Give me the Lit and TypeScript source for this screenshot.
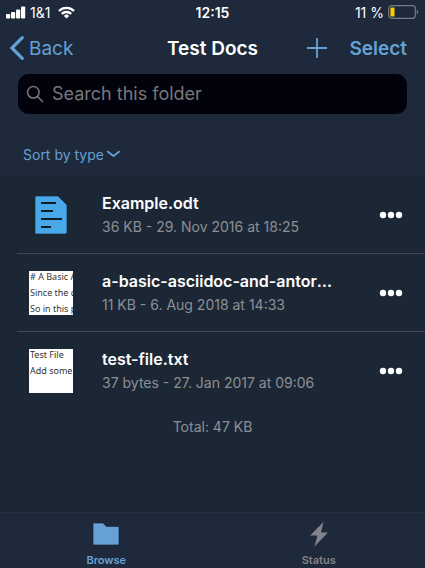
import { LitElement, html, css } from "lit";
import { customElement, property } from "lit/decorators.js";

interface FileEntry {
  name: string;
  info: string;
  preview?: string[];
}

const files: FileEntry[] = [
  { name: "Example.odt", info: "36 KB - 29. Nov 2016 at 18:25" },
  {
    name: "a-basic-asciidoc-and-antora-demo.adoc",
    info: "11 KB - 6. Aug 2018 at 14:33",
    preview: ["# A Basic A", "Since the d", "So in this p"],
  },
  {
    name: "test-file.txt",
    info: "37 bytes - 27. Jan 2017 at 09:06",
    preview: ["Test File", "Add some"],
  },
];

@customElement("file-row")
export class FileRow extends LitElement {
  @property({ attribute: false }) file!: FileEntry;

  static styles = css`
    :host {
      display: flex;
      align-items: center;
      height: 77px;
      padding-right: 18px;
    }
    .thumb {
      flex: none;
      display: flex;
      justify-content: center;
      width: 44px;
      margin: 0 29px 0 12px;
    }
    .paper {
      width: 44px;
      height: 44px;
      overflow: hidden;
      background: #fff;
      color: #333;
      font: 9px/16px "Noto Sans", sans-serif;
      white-space: nowrap;
    }
    .lines {
      margin: -2px 0 0 1px;
    }
    .text {
      flex: 1;
      min-width: 0;
    }
    .name,
    .info {
      margin: 0;
      max-width: 232px;
      overflow: hidden;
      text-overflow: ellipsis;
      white-space: nowrap;
    }
    .name {
      font-size: 16px;
      font-weight: 600;
      line-height: 24px;
      color: #fff;
    }
    .info {
      font-size: 14px;
      line-height: 24px;
      color: #8c8f93;
    }
    button {
      flex: none;
      display: flex;
      padding: 10px 4px;
      border: 0;
      background: none;
      color: #fff;
    }
  `;

  render() {
    const { name, info, preview } = this.file;
    return html`
      <div class="thumb">
        ${preview
          ? html`<div class="paper">
              <div class="lines">${preview.map((line) => html`<div>${line}</div>`)}</div>
            </div>`
          : html`<svg width="34" height="40" viewBox="0 0 34 40" aria-hidden="true">
              <path d="M2 1h22l9 9v27a2 2 0 0 1-2 2H2a1 1 0 0 1-1-1V2a1 1 0 0 1 1-1z" fill="#48a8e8" stroke="#142030" stroke-width=".6" />
              <path d="M7 8h15M7 16h12M7 24h21M7 32h10" stroke="#121d2c" stroke-width="2.2" />
            </svg>`}
      </div>
      <div class="text">
        <p class="name">${name}</p>
        <p class="info">${info}</p>
      </div>
      <button aria-label="Actions for ${name}">
        <svg width="24" height="8" viewBox="0 0 24 8" fill="currentColor">
          <circle cx="4" cy="4" r="3.2" />
          <circle cx="12" cy="4" r="3.2" />
          <circle cx="20" cy="4" r="3.2" />
        </svg>
      </button>
    `;
  }
}

@customElement("app-root")
export class AppRoot extends LitElement {
  static styles = css`
    :host {
      display: flex;
      flex-direction: column;
      min-height: 100vh;
      background: #1c2736;
      color: #fff;
      font-family: Inter, "Liberation Sans", sans-serif;
    }
    svg {
      flex: none;
      display: block;
    }
    button {
      padding: 0;
      border: 0;
      background: none;
      color: #65a1d5;
      font: inherit;
    }
    a {
      color: #65a1d5;
      text-decoration: none;
    }
    .top {
      background: #1e293b;
      border-bottom: 1px solid #1a2534;
    }
    .status,
    .nav {
      display: grid;
      grid-template-columns: 1fr auto 1fr;
      align-items: center;
    }
    .status {
      height: 24px;
      padding: 0 6px;
      font-size: 14px;
    }
    .carrier,
    .power {
      display: flex;
      align-items: center;
      gap: 4px;
    }
    .carrier svg:last-child {
      margin-left: 4px;
    }
    .power {
      justify-content: flex-end;
    }
    .clock {
      font-weight: 600;
    }
    .nav {
      height: 48px;
      padding: 0 18px;
      font-size: 19px;
    }
    .back {
      display: flex;
      align-items: center;
      gap: 4px;
      margin-left: -9px;
    }
    h1 {
      margin: 0;
      font-size: 19px;
      font-weight: 600;
    }
    .actions {
      display: flex;
      align-items: center;
      justify-content: flex-end;
      gap: 22px;
    }
    .select {
      font-weight: 600;
    }
    .search {
      display: flex;
      align-items: center;
      gap: 8px;
      height: 40px;
      margin: 2px 18px 17px;
      padding: 0 8px;
      border-radius: 11px;
      background: #01020c;
      color: #77777a;
    }
    input {
      flex: 1;
      min-width: 0;
      padding: 0;
      border: 0;
      outline: 0;
      background: none;
      color: #fff;
      font: 18px/24px Inter, "Liberation Sans", sans-serif;
      appearance: none;
    }
    input::placeholder {
      color: #77777a;
      opacity: 1;
    }
    .sort {
      display: flex;
      align-items: center;
      height: 44px;
      padding: 0 23px;
      background: #1e293b;
    }
    .sort button {
      display: flex;
      align-items: center;
      gap: 3px;
      font-size: 14px;
    }
    main {
      flex: 1;
    }
    ul {
      margin: 0 0 0 17px;
      padding: 0;
      list-style: none;
    }
    li + li {
      border-top: 1px solid #41474f;
    }
    .total {
      margin: 6px 0 0;
      font-size: 14px;
      line-height: 24px;
      text-align: center;
      color: #8c8f93;
    }
    .tabs {
      display: grid;
      grid-template-columns: 1fr 1fr;
      height: 55px;
      border-top: 1px solid #263140;
      background: #1e293b;
    }
    .tab {
      display: flex;
      flex-direction: column;
      align-items: center;
      padding-top: 8px;
      gap: 5px;
      font-size: 11px;
      font-weight: 600;
      line-height: 16px;
      color: #828489;
    }
    .tab.active {
      color: #65a1d5;
    }
  `;

  render() {
    return html`
      <header class="top">
        <div class="status">
          <div class="carrier">
            <svg width="20" height="13" viewBox="0 0 20 13" fill="#fff" aria-hidden="true">
              <rect x="0" y="8" width="4.200" height="4.500" rx="1" />
              <rect x="5" y="6" width="4.200" height="6.500" rx="1" />
              <rect x="10" y="3.500" width="4.200" height="9" rx="1" />
              <rect x="15" y="0.500" width="4.200" height="12" rx="1" />
            </svg>
            <span>1&amp;1</span>
            <svg width="17" height="13" viewBox="0 0 17 13" fill="none" stroke="#fff" stroke-width="2.4" aria-hidden="true">
              <path d="M1 5a10.6 10.6 0 0 1 15 0M3.8 7.9a6.6 6.6 0 0 1 9.4 0" />
              <path d="M8.500 12.500L5.900 9.900a3.700 3.700 0 0 1 5.200 0z" fill="#fff" stroke="none" />
            </svg>
          </div>
          <span class="clock">12:15</span>
          <div class="power">
            <span>11 %</span>
            <svg width="31" height="14" viewBox="0 0 31 14" aria-hidden="true">
              <rect x=".7" y=".7" width="26.600" height="12.600" rx="3" fill="none" stroke="#747b86" stroke-width="1.200" />
              <rect x="2.500" y="2.500" width="4" height="9" rx=".8" fill="#ffcc00" />
              <path d="M28.700 4.700a2.500 2.500 0 0 1 0 4.600z" fill="#747b86" />
            </svg>
          </div>
        </div>
        <nav class="nav">
          <a class="back" href="#back">
            <svg width="16" height="26" viewBox="0 0 16 26" fill="none" stroke="currentColor" stroke-width="3.200" stroke-linecap="round">
              <path d="M13.300 2.600L2.900 13l10.400 10.400" />
            </svg>
            Back
          </a>
          <h1>Test Docs</h1>
          <div class="actions">
            <button aria-label="Add">
              <svg width="20" height="20" viewBox="0 0 20 20" stroke="currentColor" stroke-width="1.800">
                <path d="M10 0v20M0 10h20" />
              </svg>
            </button>
            <button class="select">Select</button>
          </div>
        </nav>
        <label class="search">
          <svg width="18" height="18" viewBox="0 0 18 18" fill="none" stroke="currentColor" stroke-width="1.500" stroke-linecap="round" aria-hidden="true">
            <circle cx="7.300" cy="7.300" r="5.800" />
            <path d="M11.600 11.600L16.500 16.500" />
          </svg>
          <input type="search" aria-label="Search this folder" placeholder="Search this folder" />
        </label>
      </header>
      <div class="sort">
        <button>
          Sort by type
          <svg width="13" height="8" viewBox="0 0 13 8" fill="none" stroke="currentColor" stroke-width="1.900" stroke-linecap="round" stroke-linejoin="round">
            <path d="M1 1.700l5.500 4.300L12 1.700" />
          </svg>
        </button>
      </div>
      <main>
        <ul>
          ${files.map((file) => html`<li><file-row .file=${file}></file-row></li>`)}
        </ul>
        <p class="total">Total: 47 KB</p>
      </main>
      <nav class="tabs">
        <a class="tab active" href="#browse">
          <svg width="28" height="26" viewBox="0 0 28 26" fill="currentColor" stroke="#142030" stroke-width=".6">
            <path d="M2 2h9l3.500 3.500H26a1 1 0 0 1 1 1V23a1 1 0 0 1-1 1H2a1 1 0 0 1-1-1V3a1 1 0 0 1 1-1z" />
          </svg>
          Browse
        </a>
        <a class="tab" href="#status">
          <svg width="18" height="26" viewBox="0 0 18 26" fill="currentColor">
            <path d="M13.500 1L0 14.500h7.500L4.500 25.500L18 11.500h-7z" />
          </svg>
          Status
        </a>
      </nav>
    `;
  }
}
